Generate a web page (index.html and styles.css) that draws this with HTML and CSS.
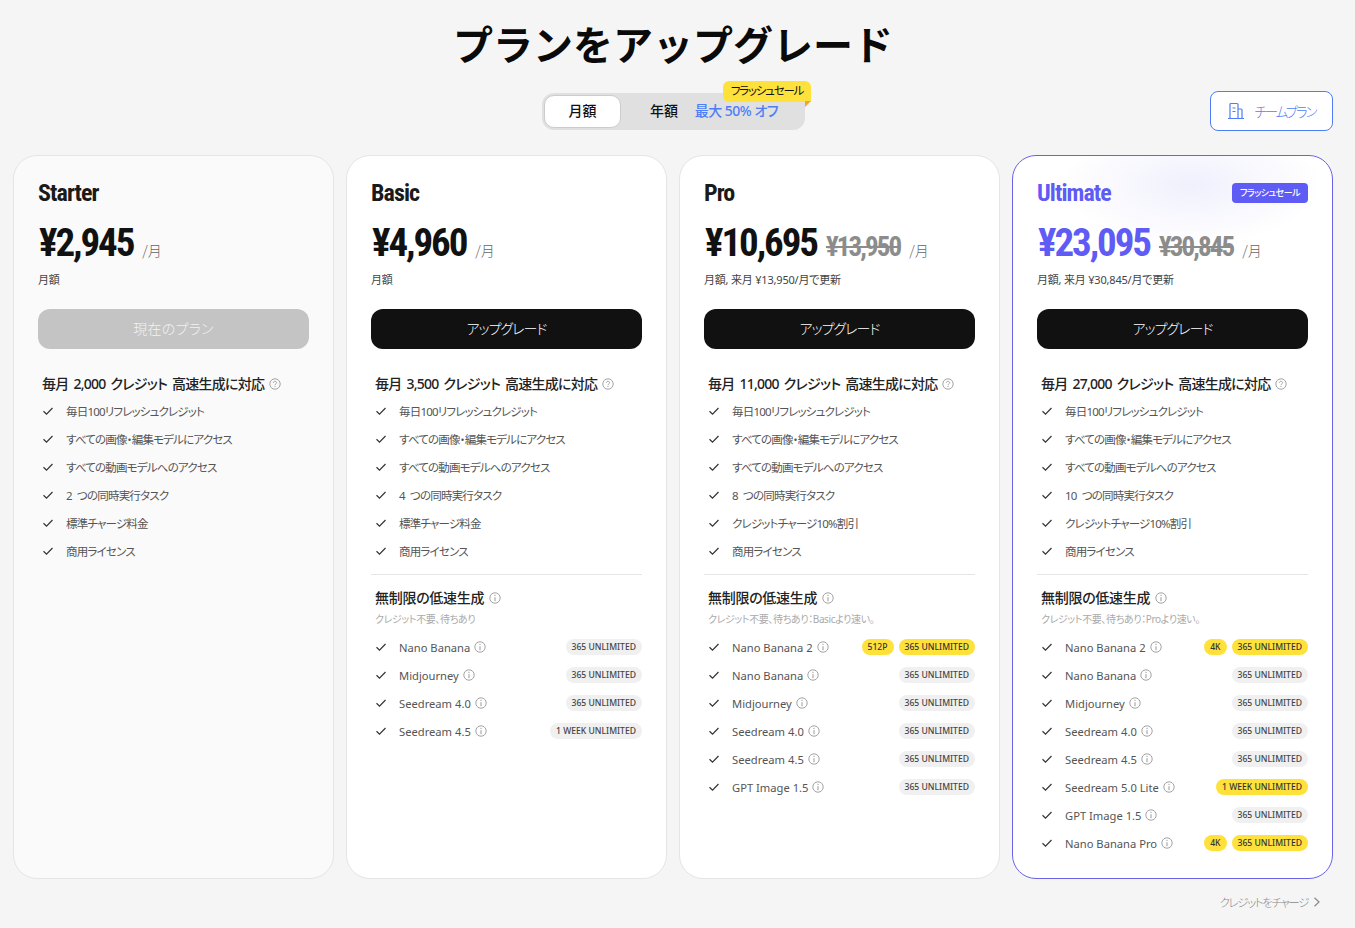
FILE: index.html
```html
<!DOCTYPE html>
<html lang="ja">
<head>
    <meta charset="UTF-8">
    <title>プランをアップグレード</title>
    <link rel="stylesheet" href="styles.css">
</head>
<body>
    <svg class="sprites" width="0" height="0">
        <symbol id="check" viewBox="0 0 12 12"><path d="M1.5 6.3 4.5 9.2 10.5 3" fill="none" stroke="currentColor" stroke-width="1.2"/></symbol>
        <symbol id="info" viewBox="0 0 12 12"><circle cx="6" cy="6" r="5.2" fill="none" stroke="currentColor" stroke-width=".9"/><path d="M6 5.2V9.200M6 2.800v1.200" stroke="currentColor" fill="none"/></symbol>
        <symbol id="help" viewBox="0 0 12 12"><circle cx="6" cy="6" r="5.2" fill="none" stroke="currentColor" stroke-width=".9"/><path d="M4.4 4.800C4.400 3.800 5.100 3.300 6 3.300s1.600.6 1.600 1.400c0 1.200-1.600 1.200-1.600 2.500M6 8v1" stroke="currentColor" fill="none" stroke-width=".9"/></symbol>
    </svg>

    <header class="top">
        <h1>プランをアップグレード</h1>
        <div class="toggle-row">
            <div class="toggle">
                <span class="toggle-on">月額</span>
                <span class="toggle-off">年額 <em>最大 50% オフ</em></span>
                <span class="flash">フラッシュセール</span>
            </div>
            <button class="team">
                <svg width="18" height="18" viewBox="0 0 18 18" fill="none" stroke="currentColor" stroke-width="1.2"><path d="M1 16.500h16M3 16.500V2.500q0-1 1-1h6q1 0 1 1v14M11 7h3q1 0 1 1v8.500M5.500 6h3M5.500 9.500h3"/></svg>
                <span>チームプラン</span>
            </button>
        </div>
    </header>

    <main class="plans">
        <section class="card card-starter">
            <div class="card-head"><h2>Starter</h2></div>
            <div class="price"><strong>¥2,945</strong><span class="per">/月</span></div>
            <p class="note">月額</p>
            <button class="cta cta-current">現在のプラン</button>
            <h3>毎月 2,000 クレジット 高速生成に対応 <svg class="help"><use href="#help"/></svg></h3>
            <ul class="features">
                <li><svg class="tick"><use href="#check"/></svg>毎日100リフレッシュクレジット</li>
                <li><svg class="tick"><use href="#check"/></svg>すべての画像・編集モデルにアクセス</li>
                <li><svg class="tick"><use href="#check"/></svg>すべての動画モデルへのアクセス</li>
                <li><svg class="tick"><use href="#check"/></svg>2 つの同時実行タスク</li>
                <li><svg class="tick"><use href="#check"/></svg>標準チャージ料金</li>
                <li><svg class="tick"><use href="#check"/></svg>商用ライセンス</li>
            </ul>
        </section>

        <section class="card">
            <div class="card-head"><h2>Basic</h2></div>
            <div class="price"><strong>¥4,960</strong><span class="per">/月</span></div>
            <p class="note">月額</p>
            <button class="cta">アップグレード</button>
            <h3>毎月 3,500 クレジット 高速生成に対応 <svg class="help"><use href="#help"/></svg></h3>
            <ul class="features">
                <li><svg class="tick"><use href="#check"/></svg>毎日100リフレッシュクレジット</li>
                <li><svg class="tick"><use href="#check"/></svg>すべての画像・編集モデルにアクセス</li>
                <li><svg class="tick"><use href="#check"/></svg>すべての動画モデルへのアクセス</li>
                <li><svg class="tick"><use href="#check"/></svg>4 つの同時実行タスク</li>
                <li><svg class="tick"><use href="#check"/></svg>標準チャージ料金</li>
                <li><svg class="tick"><use href="#check"/></svg>商用ライセンス</li>
            </ul>
            <hr>
            <h3 class="slow">無制限の低速生成 <svg class="help"><use href="#info"/></svg></h3>
            <p class="slow-note">クレジット不要、待ちあり</p>
            <ul class="models">
                <li><svg class="tick"><use href="#check"/></svg><span>Nano Banana</span><svg class="help"><use href="#info"/></svg><b class="pill">365 UNLIMITED</b></li>
                <li><svg class="tick"><use href="#check"/></svg><span>Midjourney</span><svg class="help"><use href="#info"/></svg><b class="pill">365 UNLIMITED</b></li>
                <li><svg class="tick"><use href="#check"/></svg><span>Seedream 4.0</span><svg class="help"><use href="#info"/></svg><b class="pill">365 UNLIMITED</b></li>
                <li><svg class="tick"><use href="#check"/></svg><span>Seedream 4.5</span><svg class="help"><use href="#info"/></svg><b class="pill">1 WEEK UNLIMITED</b></li>
            </ul>
        </section>

        <section class="card">
            <div class="card-head"><h2>Pro</h2></div>
            <div class="price"><strong>¥10,695</strong><s>¥13,950</s><span class="per">/月</span></div>
            <p class="note">月額, 来月 ¥13,950/月で更新</p>
            <button class="cta">アップグレード</button>
            <h3>毎月 11,000 クレジット 高速生成に対応 <svg class="help"><use href="#help"/></svg></h3>
            <ul class="features">
                <li><svg class="tick"><use href="#check"/></svg>毎日100リフレッシュクレジット</li>
                <li><svg class="tick"><use href="#check"/></svg>すべての画像・編集モデルにアクセス</li>
                <li><svg class="tick"><use href="#check"/></svg>すべての動画モデルへのアクセス</li>
                <li><svg class="tick"><use href="#check"/></svg>8 つの同時実行タスク</li>
                <li><svg class="tick"><use href="#check"/></svg>クレジットチャージ10%割引</li>
                <li><svg class="tick"><use href="#check"/></svg>商用ライセンス</li>
            </ul>
            <hr>
            <h3 class="slow">無制限の低速生成 <svg class="help"><use href="#info"/></svg></h3>
            <p class="slow-note">クレジット不要、待ちあり：Basicより速い。</p>
            <ul class="models">
                <li><svg class="tick"><use href="#check"/></svg><span>Nano Banana 2</span><svg class="help"><use href="#info"/></svg><b class="pill pill-hot">512P</b><b class="pill pill-hot">365 UNLIMITED</b></li>
                <li><svg class="tick"><use href="#check"/></svg><span>Nano Banana</span><svg class="help"><use href="#info"/></svg><b class="pill">365 UNLIMITED</b></li>
                <li><svg class="tick"><use href="#check"/></svg><span>Midjourney</span><svg class="help"><use href="#info"/></svg><b class="pill">365 UNLIMITED</b></li>
                <li><svg class="tick"><use href="#check"/></svg><span>Seedream 4.0</span><svg class="help"><use href="#info"/></svg><b class="pill">365 UNLIMITED</b></li>
                <li><svg class="tick"><use href="#check"/></svg><span>Seedream 4.5</span><svg class="help"><use href="#info"/></svg><b class="pill">365 UNLIMITED</b></li>
                <li><svg class="tick"><use href="#check"/></svg><span>GPT Image 1.5</span><svg class="help"><use href="#info"/></svg><b class="pill">365 UNLIMITED</b></li>
            </ul>
        </section>

        <section class="card card-ultimate">
            <div class="card-head"><h2>Ultimate</h2><span class="tag">フラッシュセール</span></div>
            <div class="price"><strong>¥23,095</strong><s>¥30,845</s><span class="per">/月</span></div>
            <p class="note">月額, 来月 ¥30,845/月で更新</p>
            <button class="cta">アップグレード</button>
            <h3>毎月 27,000 クレジット 高速生成に対応 <svg class="help"><use href="#help"/></svg></h3>
            <ul class="features">
                <li><svg class="tick"><use href="#check"/></svg>毎日100リフレッシュクレジット</li>
                <li><svg class="tick"><use href="#check"/></svg>すべての画像・編集モデルにアクセス</li>
                <li><svg class="tick"><use href="#check"/></svg>すべての動画モデルへのアクセス</li>
                <li><svg class="tick"><use href="#check"/></svg>10 つの同時実行タスク</li>
                <li><svg class="tick"><use href="#check"/></svg>クレジットチャージ10%割引</li>
                <li><svg class="tick"><use href="#check"/></svg>商用ライセンス</li>
            </ul>
            <hr>
            <h3 class="slow">無制限の低速生成 <svg class="help"><use href="#info"/></svg></h3>
            <p class="slow-note">クレジット不要、待ちあり：Proより速い。</p>
            <ul class="models">
                <li><svg class="tick"><use href="#check"/></svg><span>Nano Banana 2</span><svg class="help"><use href="#info"/></svg><b class="pill pill-hot">4K</b><b class="pill pill-hot">365 UNLIMITED</b></li>
                <li><svg class="tick"><use href="#check"/></svg><span>Nano Banana</span><svg class="help"><use href="#info"/></svg><b class="pill">365 UNLIMITED</b></li>
                <li><svg class="tick"><use href="#check"/></svg><span>Midjourney</span><svg class="help"><use href="#info"/></svg><b class="pill">365 UNLIMITED</b></li>
                <li><svg class="tick"><use href="#check"/></svg><span>Seedream 4.0</span><svg class="help"><use href="#info"/></svg><b class="pill">365 UNLIMITED</b></li>
                <li><svg class="tick"><use href="#check"/></svg><span>Seedream 4.5</span><svg class="help"><use href="#info"/></svg><b class="pill">365 UNLIMITED</b></li>
                <li><svg class="tick"><use href="#check"/></svg><span>Seedream 5.0 Lite</span><svg class="help"><use href="#info"/></svg><b class="pill pill-hot">1 WEEK UNLIMITED</b></li>
                <li><svg class="tick"><use href="#check"/></svg><span>GPT Image 1.5</span><svg class="help"><use href="#info"/></svg><b class="pill">365 UNLIMITED</b></li>
                <li><svg class="tick"><use href="#check"/></svg><span>Nano Banana Pro</span><svg class="help"><use href="#info"/></svg><b class="pill pill-hot">4K</b><b class="pill pill-hot">365 UNLIMITED</b></li>
            </ul>
        </section>
    </main>

    <footer class="foot">
        <a>クレジットをチャージ</a>
        <svg width="8" height="10" viewBox="0 0 8 10" fill="none" stroke="currentColor" stroke-width="1.2"><path d="M1.500 .8 6 5 1.500 9.200"/></svg>
    </footer>
</body>
</html>
```

FILE: styles.css
```css
/* Page */
* {
    box-sizing: border-box;
}

body {
    margin: 0;
    height: 928px;
    overflow: hidden;
    padding: 0 22px 0 13px;
    background: #f5f5f5;
    color: #111;
    font-family: "Noto Sans", "Noto Sans CJK JP", sans-serif;
    font-feature-settings: "palt";
}

.sprites {
    position: absolute;
}

h1, h2, h3, p, ul {
    margin: 0;
    padding: 0;
}

ul {
    list-style: none;
}

/* Header */
.top {
    height: 155px;
    padding-top: 18px;
}

h1 {
    text-align: center;
    font-size: 40px;
    line-height: 54px;
    font-weight: 700;
    color: #0a0a0a;
    font-feature-settings: normal;
}

.toggle-row {
    display: flex;
    justify-content: space-between;
    align-items: flex-start;
    margin-top: 19px;
    padding-left: 529px;
}

.toggle {
    position: relative;
    display: flex;
    align-items: center;
    width: 263px;
    height: 37px;
    margin-top: 2px;
    padding: 2px;
    background: #e0e0e0;
    border-radius: 12px;
    font-size: 14px;
    font-weight: 500;
    line-height: 29px;
}

.toggle-on {
    width: 77px;
    height: 33px;
    padding-bottom: 2px;
    text-align: center;
    background: #fff;
    border: 1px solid #ccc;
    border-radius: 10px;
}

.toggle-off {
    margin-left: 29px;
    margin-bottom: 3px;
    white-space: nowrap;
}

.toggle-off em {
    margin-left: 13px;
    font-style: normal;
    letter-spacing: -.5px;
    color: #4d7ef7;
}

.flash {
    position: absolute;
    top: -12px;
    right: -6px;
    width: 88px;
    height: 21px;
    line-height: 20px;
    text-align: center;
    background: #ffe13c;
    border-radius: 6px 6px 0 6px;
    font-size: 11.5px;
    font-weight: 400;
    letter-spacing: -1.2px;
}

.flash::after {
    content: "";
    position: absolute;
    top: 20px;
    right: 0;
    border-top: 6px solid #f5a524;
    border-right: 6px solid transparent;
}

.team {
    display: flex;
    align-items: center;
    justify-content: center;
    gap: 9px;
    width: 123px;
    height: 40px;
    background: #fff;
    border: 1px solid #4d7ef7;
    border-radius: 8px;
    color: #4d7ef7;
    font: 300 13.5px "Noto Sans CJK JP", sans-serif;
    font-feature-settings: "palt";
    letter-spacing: -2px;
}

.team span {
    padding-bottom: 1px;
}

/* Plan cards */
.plans {
    display: grid;
    grid-template-columns: repeat(4, 321px);
    gap: 12px;
}

.card {
    height: 724px;
    padding: 24px;
    background: #fff;
    border: 1px solid #e5e5e5;
    border-radius: 24px;
}

.card-starter {
    background: #fafafa;
}

.card-ultimate {
    border-color: #6a63e8;
    background: radial-gradient(ellipse 130px 60px at 56% 4%, #f0f0fd, #fff);
}

.card-head {
    display: flex;
    justify-content: space-between;
    align-items: center;
    height: 26px;
}

h2 {
    font-family: Roboto, sans-serif;
    font-stretch: 75%;
    font-size: 24px;
    font-weight: 700;
    letter-spacing: -.9px;
    color: #1a1a1a;
}

.card-ultimate h2,
.card-ultimate .price strong {
    color: #5f5bf5;
}

.tag {
    padding: 0 8px;
    height: 20px;
    line-height: 19px;
    background: #5f5bf5;
    border-radius: 4px;
    color: #fff;
    font-size: 9px;
    font-weight: 500;
    letter-spacing: -.5px;
}

.price {
    display: flex;
    align-items: baseline;
    height: 44px;
    margin-top: 15px;
    padding-left: 1px;
    white-space: nowrap;
    font-family: Roboto, sans-serif;
    font-stretch: 75%;
}

.price strong {
    font-size: 39px;
    line-height: 44px;
    font-weight: 700;
    letter-spacing: -2.1px;
}

.price s {
    margin-left: 9px;
    font-size: 27px;
    font-weight: 700;
    letter-spacing: -1.9px;
    color: #8c8c8c;
}

.per {
    margin-left: 9px;
    font-family: "Noto Sans CJK JP", sans-serif;
    font-stretch: normal;
    font-size: 14px;
    font-weight: 300;
    color: #666;
}

.note {
    margin-top: 7px;
    font-size: 11px;
    line-height: 16px;
    letter-spacing: -.2px;
    color: #444;
}

.cta {
    display: block;
    width: 100%;
    height: 40px;
    margin-top: 21px;
    padding-bottom: 3px;
    border: none;
    border-radius: 12px;
    background: #111;
    color: #fff;
    font: 300 14px "Noto Sans CJK JP", sans-serif;
    font-feature-settings: "palt";
    letter-spacing: -1px;
}

.cta-current {
    background: #c4c4c4;
    color: #f2f2f2;
    letter-spacing: .3px;
}

h3 {
    display: flex;
    align-items: center;
    gap: 5px;
    margin-top: 25px;
    padding-left: 4px;
    font-size: 14px;
    line-height: 20px;
    font-weight: 500;
    letter-spacing: -.75px;
    word-spacing: 2px;
    color: #222;
}

/* Feature rows */
.features {
    margin-top: 3px;
}

.features li,
.models li {
    display: flex;
    align-items: center;
    height: 28px;
    padding-left: 4px;
    font-size: 11.5px;
    letter-spacing: -.8px;
    word-spacing: 3px;
    color: #555;
}

.models li {
    font-size: 11.2px;
    letter-spacing: 0;
    word-spacing: 0;
}

.tick {
    flex: none;
    width: 12px;
    height: 12px;
    margin-right: 12px;
    color: #333;
}

.help {
    flex: none;
    width: 12px;
    height: 12px;
    color: #999;
}

hr {
    margin: 9px 0 0;
    border: none;
    border-top: 1px solid #e5e5e5;
}

.slow {
    margin-top: 13px;
    letter-spacing: -.3px;
}

.slow-note {
    margin-top: 4px;
    padding-left: 4px;
    font-size: 10px;
    line-height: 14px;
    letter-spacing: -.4px;
    color: #aaa;
}

.models {
    margin-top: 7px;
}

.models li .help {
    margin-left: 4px;
}

.pill {
    height: 16px;
    line-height: 16px;
    padding: 0 6px;
    border-radius: 8px;
    background: #f0f0f0;
    color: #444;
    font-size: 8.6px;
    font-weight: 500;
    white-space: nowrap;
}

.pill-hot {
    background: #ffe13c;
    color: #333;
}

.help + .pill {
    margin-left: auto;
}

.pill + .pill {
    margin-left: 5px;
}

/* Footer */
.foot {
    display: flex;
    justify-content: flex-end;
    align-items: center;
    gap: 5px;
    margin-top: 15px;
    padding-right: 12px;
    font-size: 11.5px;
    font-weight: 300;
    letter-spacing: -1.4px;
    color: #888;
}
```
